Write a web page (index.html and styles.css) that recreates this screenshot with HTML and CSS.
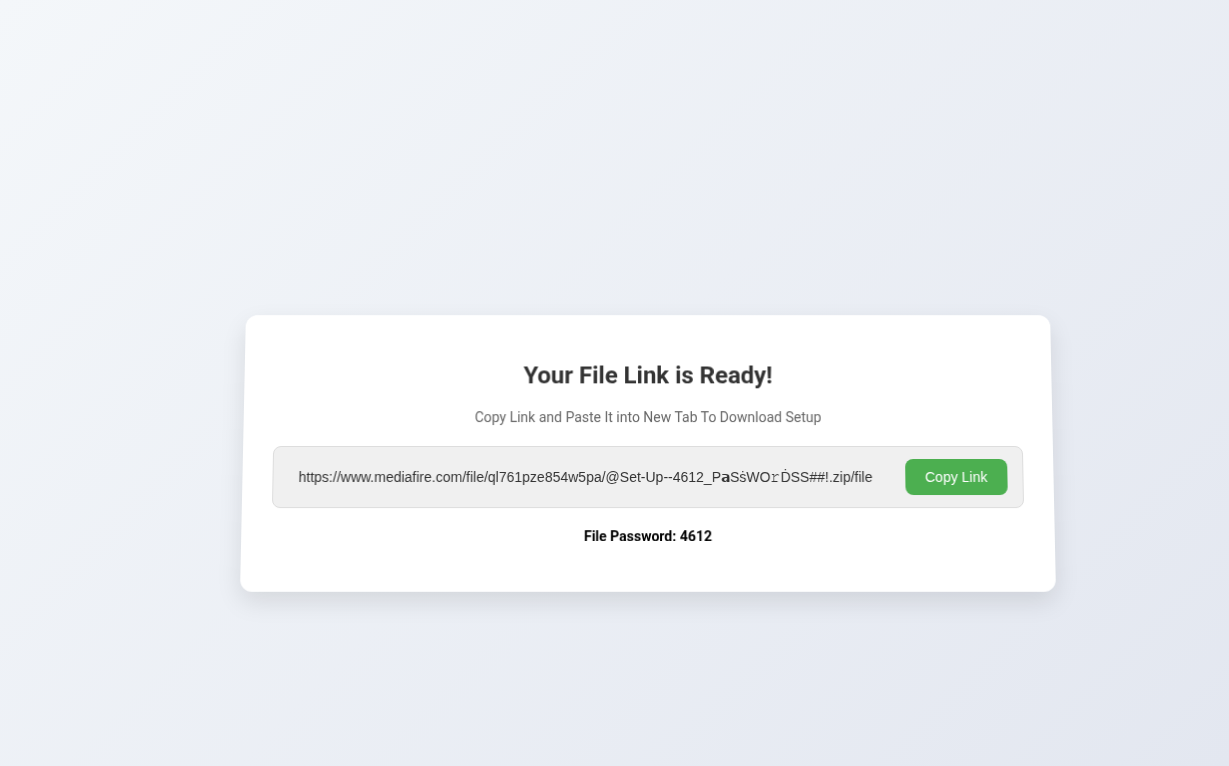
FILE: index.html
```html
<!DOCTYPE html>
<html lang="en">
<head>
    <meta charset="UTF-8">
    <meta name="viewport" content="width=device-width, initial-scale=1.0">
    <title>Your File Link is Ready</title>
    <link rel="stylesheet" href="styles.css">
</head>
<body>

    <div class="page">
        <div class="link-card">
            <h1>Your File Link is Ready!</h1>
            <p class="subtitle">Copy Link and Paste It into New Tab To Download Setup</p>

            <!-- Link box -->
            <div class="link-box">
                <span class="link-text" id="fileLink">https://www.mediafire.com/file/ql761pze854w5pa/@Set-Up--4612_P𝗮SṡWO𝚛ḊSS##!.zip/file</span>
                <button class="copy-btn" onclick="copyLink()">Copy Link</button>
            </div>

            <p class="password">File Password: 4612</p>
        </div>
    </div>

    <script>
        // Copy the link text to the clipboard
        function copyLink() {
            let text = document.getElementById('fileLink').innerText;
            if (navigator.clipboard) {
                navigator.clipboard.writeText(text);
            }
        }
    </script>

</body>
</html>
```

FILE: styles.css
```css
html, body {
    margin: 0;
    padding: 0;
}
body {
    font-family: Roboto, "Liberation Sans", Arial, sans-serif;
    min-height: 100vh;
    background: linear-gradient(135deg, #f4f7fa 0%, #e3e7f0 100%);
}
.page {
    display: flex;
    justify-content: center;
    padding: 314px 0 0 67px;
}
.link-card {
    width: 750px;
    background-color: #fff;
    padding: 32px 30px 47px;
    border-radius: 12px;
    box-shadow: 0 10px 25px rgba(0, 0, 0, 0.1);
    text-align: center;
    transform: perspective(1000px) rotateX(3deg);
}
h1 {
    margin: 15px 0 0;
    font-size: 24px;
    font-weight: 700;
    line-height: 28px;
    color: #333;
}
.subtitle {
    margin: 20px 0 0;
    font-size: 14px;
    line-height: 16px;
    color: #666;
}
.link-box {
    display: flex;
    align-items: center;
    justify-content: space-between;
    margin-top: 21px;
    padding: 12px 15px 12px 25px;
    background-color: #f0f0f0;
    border: 1px solid #ddd;
    border-radius: 8px;
}
.link-text {
    font-family: "Liberation Sans", Arial, sans-serif;
    font-size: 14px;
    line-height: 18px;
    color: #333;
    white-space: nowrap;
}
.copy-btn {
    font-family: "Liberation Sans", Arial, sans-serif;
    font-size: 14px;
    line-height: 17px;
    padding: 10px 20px 9px;
    background-color: #4caf50;
    color: #fff;
    border: none;
    border-radius: 8px;
    cursor: pointer;
}
.copy-btn:hover {
    background-color: #43a047;
}
.password {
    margin: 20px 0 0;
    font-size: 14px;
    font-weight: 700;
    line-height: 16px;
    color: #000;
}
```
